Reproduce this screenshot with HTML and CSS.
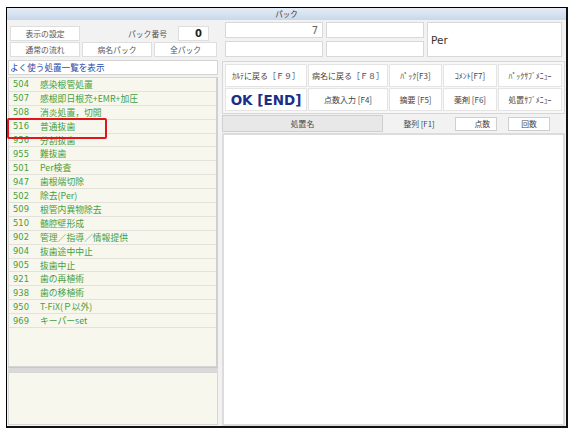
FILE: index.html
```html
<!DOCTYPE html>
<html lang="ja">
<head>
<meta charset="utf-8">
<title>パック</title>
<link rel="stylesheet" href="styles.css">
</head>
<body>
<div class="window">
  <div class="titlebar">パック</div>
  <div class="main">
    <div class="left">
      <div class="lt-row1">
        <div class="box w70">表示の設定</div>
        <div class="label">パック番号</div>
        <div class="box num">0</div>
      </div>
      <div class="lt-row2">
        <div class="box">通常の流れ</div>
        <div class="box">病名パック</div>
        <div class="box">全パック</div>
      </div>
      <div class="freq">よく使う処置一覧を表示</div>
      <div class="list">
        <div class="row"><span class="code">504</span><span class="name">感染根管処置</span></div>
        <div class="row"><span class="code">507</span><span class="name">感根即日根充+EMR+加圧</span></div>
        <div class="row"><span class="code">508</span><span class="name">消炎処置，切開</span></div>
        <div class="row"><span class="code">516</span><span class="name">普通抜歯</span></div>
        <div class="row"><span class="code">956</span><span class="name">分割抜歯</span></div>
        <div class="row"><span class="code">955</span><span class="name">難抜歯</span></div>
        <div class="row"><span class="code">501</span><span class="name">Per検査</span></div>
        <div class="row"><span class="code">947</span><span class="name">歯根端切除</span></div>
        <div class="row"><span class="code">502</span><span class="name">除去(Per)</span></div>
        <div class="row"><span class="code">509</span><span class="name">根管内異物除去</span></div>
        <div class="row"><span class="code">510</span><span class="name">髄腔壁形成</span></div>
        <div class="row"><span class="code">902</span><span class="name">管理／指導／情報提供</span></div>
        <div class="row"><span class="code">904</span><span class="name">抜歯途中中止</span></div>
        <div class="row"><span class="code">905</span><span class="name">抜歯中止</span></div>
        <div class="row"><span class="code">921</span><span class="name">歯の再植術</span></div>
        <div class="row"><span class="code">938</span><span class="name">歯の移植術</span></div>
        <div class="row"><span class="code">950</span><span class="name">T-FiX(Ｐ以外)</span></div>
        <div class="row"><span class="code">969</span><span class="name">キーパーset</span></div>
        <div class="highlight"></div>
      </div>
      <div class="splitter"></div>
      <div class="bottom-panel"></div>
    </div>
    <div class="right">
      <div class="rt-top">
        <div class="box val">7</div>
        <div class="box"></div>
        <div class="box per">Per</div>
        <div class="box"></div>
        <div class="box"></div>
      </div>
      <div class="buttons">
        <div class="btn">ｶﾙﾃに戻る［Ｆ９］</div>
        <div class="btn">病名に戻る［Ｆ８］</div>
        <div class="btn">ﾊﾟｯｸ[F3]</div>
        <div class="btn">ｺﾒﾝﾄ[F7]</div>
        <div class="btn small">ﾊﾟｯｸｻﾌﾞﾒﾆｭｰ</div>
        <div class="btn ok">OK [END]</div>
        <div class="btn">点数入力 [F4]</div>
        <div class="btn">摘要 [F5]</div>
        <div class="btn">薬剤 [F6]</div>
        <div class="btn small">処置ｻﾌﾞﾒﾆｭｰ</div>
      </div>
      <div class="header">
        <div class="h-name">処置名</div>
        <div class="h-sort">整列 [F1]</div>
        <div class="h-box h-pts">点数</div>
        <div class="h-gap"></div>
        <div class="h-box h-cnt">回数</div>
      </div>
      <div class="items"></div>
    </div>
  </div>
</div>
</body>
</html>
```

FILE: styles.css
```css
* { box-sizing: border-box; }
body {
  margin: 0;
  padding: 7px 0 0 6px;
  background: #ffffff;
  font-family: "Noto Sans CJK JP", "Noto Sans", sans-serif;
  color: #444;
}
.window {
  width: 562px;
  height: 421px;
  border-top: 1px solid #000;
  border-left: 1px solid #000;
  border-right: 2px solid #111;
  border-bottom: 2px solid #111;
  background: #f2f2f2;
  display: flex;
  flex-direction: column;
}
.titlebar {
  height: 12px;
  background: linear-gradient(#e4ecf5, #c8d8ea);
  font-size: 7.5px;
  line-height: 12px;
  text-align: center;
  color: #333;
}
.main {
  flex: 1;
  display: flex;
  padding-left: 1px;
  gap: 4px;
}
.left {
  width: 210px;
  display: flex;
  flex-direction: column;
}
.box {
  background: #fff;
  border: 1px solid #dedede;
  font-size: 7.8px;
  color: #555;
  display: flex;
  align-items: center;
  justify-content: center;
}
.lt-row1 {
  margin-top: 6px;
  height: 15px;
  display: flex;
  padding-left: 2px;
  padding-right: 9px;
}
.w70 { width: 70px; }
.label {
  flex: 1;
  font-size: 7.8px;
  color: #555;
  text-align: right;
  padding-right: 11px;
  line-height: 15px;
}
.num {
  width: 31px;
  font-family: "DejaVu Sans", sans-serif;
  font-weight: bold;
  font-size: 10px;
  color: #222;
  justify-content: flex-end;
  padding-right: 6px;
}
.lt-row2 {
  margin-top: 1px;
  height: 15px;
  display: grid;
  grid-template-columns: 70px 70px 63px;
  column-gap: 2px;
  padding-left: 2px;
}
.freq {
  margin-top: 3px;
  height: 15px;
  background: #fff;
  border: 1px solid #d4d4d4;
  color: #2a48a6;
  font-size: 8.6px;
  line-height: 13px;
  padding-left: 1px;
}
.list {
  position: relative;
  margin-top: 2px;
  height: 290px;
  background: #f7f7ee;
  border: 1px solid #d6d6d6;
  border-right: 2px solid #d0d0d0;
}
.row {
  height: 13.9px;
  display: flex;
  align-items: center;
  border-bottom: 1px solid #e2e2da;
  color: #46a040;
  font-size: 8.8px;
}
.code {
  width: 31px;
  padding-left: 4px;
  font-family: "DejaVu Sans", sans-serif;
  font-size: 8.4px;
}
.name { white-space: nowrap; }
.highlight {
  position: absolute;
  left: -2px;
  top: 40px;
  width: 100px;
  height: 21px;
  border: 2.5px solid #e3141c;
  border-radius: 2px;
}
.splitter {
  height: 5px;
  background: #dadada;
  border-top: 1px solid #c8c8c8;
}
.bottom-panel {
  height: 53px;
  background: #f7f7ee;
  border: 1px solid #d6d6d6;
}
.right {
  width: 343px;
  display: flex;
  flex-direction: column;
}
.rt-top {
  margin-top: 2px;
  margin-left: 3px;
  display: grid;
  grid-template-columns: 98px 98px 135px;
  grid-template-rows: 16px 16px;
  column-gap: 3px;
  row-gap: 3px;
}
.rt-top .box { border-color: #d8d8d8; }
.val {
  justify-content: flex-end;
  padding-right: 4px;
  font-family: "DejaVu Sans", sans-serif;
  font-size: 10px;
  color: #666;
}
.per {
  grid-column: 3;
  grid-row: 1 / span 2;
  justify-content: flex-start;
  padding-left: 3px;
  font-family: "DejaVu Sans", sans-serif;
  font-size: 10.5px;
  color: #333;
}
.buttons {
  margin-top: 4px;
  height: 53px;
  border: 1px solid #d6d6d6;
  background: #f7f7f7;
  padding: 2px;
  display: grid;
  grid-template-columns: 82px 80px 53px 54px 64px;
  grid-template-rows: 23px 23px;
  gap: 1px;
}
.btn {
  background: #fff;
  border: 1px solid #e4e4e4;
  font-size: 8px;
  color: #444;
  display: flex;
  align-items: center;
  justify-content: center;
  white-space: nowrap;
}
.btn.small { font-size: 7.8px; }
.btn.ok {
  font-family: "DejaVu Sans", sans-serif;
  font-weight: bold;
  font-size: 13.5px;
  color: #1c2f86;
}
.header {
  margin-top: 1px;
  height: 17px;
  display: grid;
  grid-template-columns: 161px 72px 42px 11px 42px;
  align-items: center;
}
.h-name {
  height: 17px;
  background: #e8e8e8;
  border: 1px solid #cfcfcf;
  font-size: 7.8px;
  color: #444;
  display: flex;
  align-items: center;
  justify-content: center;
}
.h-sort {
  font-size: 7.8px;
  color: #444;
  text-align: center;
}
.h-box {
  height: 14px;
  background: #fff;
  border: 1px solid #cfcfcf;
  font-size: 7.8px;
  color: #444;
  display: flex;
  align-items: center;
}
.h-pts { justify-content: flex-end; padding-right: 6px; }
.h-cnt { justify-content: center; }
.items {
  margin-top: 1px;
  flex: 1;
  background: #fff;
  border: 2px solid #dcdcdc;
}
```
